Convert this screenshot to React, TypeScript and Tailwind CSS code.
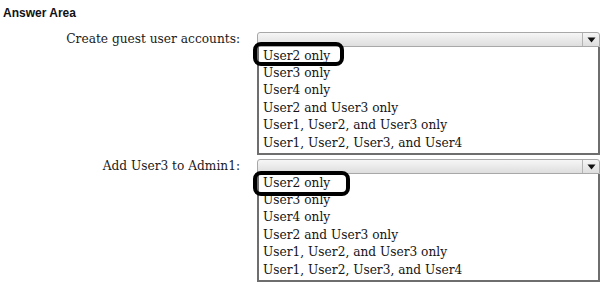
import React from 'react';

const options = [
  'User2 only',
  'User3 only',
  'User4 only',
  'User2 and User3 only',
  'User1, User2, and User3 only',
  'User1, User2, User3, and User4',
];

type DropdownProps = {
  label: string;
  circle: string;
};

const Dropdown = ({ label, circle }: DropdownProps) => (
  <div className="grid grid-cols-[240px_343px] gap-x-[17px]">
    <div className="h-[15px] flex items-center justify-end whitespace-nowrap text-[12.2px] text-[#1a1a1a]">
      {label}
    </div>
    <div>
      {/* closed select header */}
      <div className="flex h-[15px] rounded-t-[3px] border border-[#a8a8a8] bg-gradient-to-b from-[#f6f6f6] to-[#dedede]">
        <div className="flex-1" />
        <div className="w-[17px] flex items-center justify-center border-l border-[#b4b4b4]">
          <svg width="9" height="6" viewBox="0 0 9 6">
            <path d="M0.5 0.5 L8.5 0.5 L4.5 5.5 Z" fill="#111" />
          </svg>
        </div>
      </div>
      {/* open option list */}
      <div className="relative h-[108px] border-x-2 border-b-2 border-[#6e6e6e] bg-white pl-[4px] pt-[0.5px]">
        {options.map((opt) => (
          <div key={opt} className="leading-[17.4px] text-[12.2px] text-[#151515] whitespace-nowrap">
            {opt}
          </div>
        ))}
        <div className={`absolute border-4 border-black rounded-[8px] ${circle}`} />
      </div>
    </div>
  </div>
);

export default function App() {
  return (
    <div className="w-[612px] h-[289px] bg-white overflow-hidden" style={{ fontFamily: '"DejaVu Serif", serif' }}>
      <div className="pt-[5px] pl-[3px] h-[21px] text-[12px] font-bold leading-[16px] text-[#111]" style={{ fontFamily: '"Liberation Sans", Arial, sans-serif' }}>
        Answer Area
      </div>
      <div className="mt-[11px] flex flex-col gap-[4px]">
        <Dropdown label="Create guest user accounts:" circle="left-[-6px] top-[-5px] w-[91px] h-[24px]" />
        <Dropdown label="Add User3 to Admin1:" circle="left-[-6px] top-[-3px] w-[97px] h-[25px]" />
      </div>
    </div>
  );
}
